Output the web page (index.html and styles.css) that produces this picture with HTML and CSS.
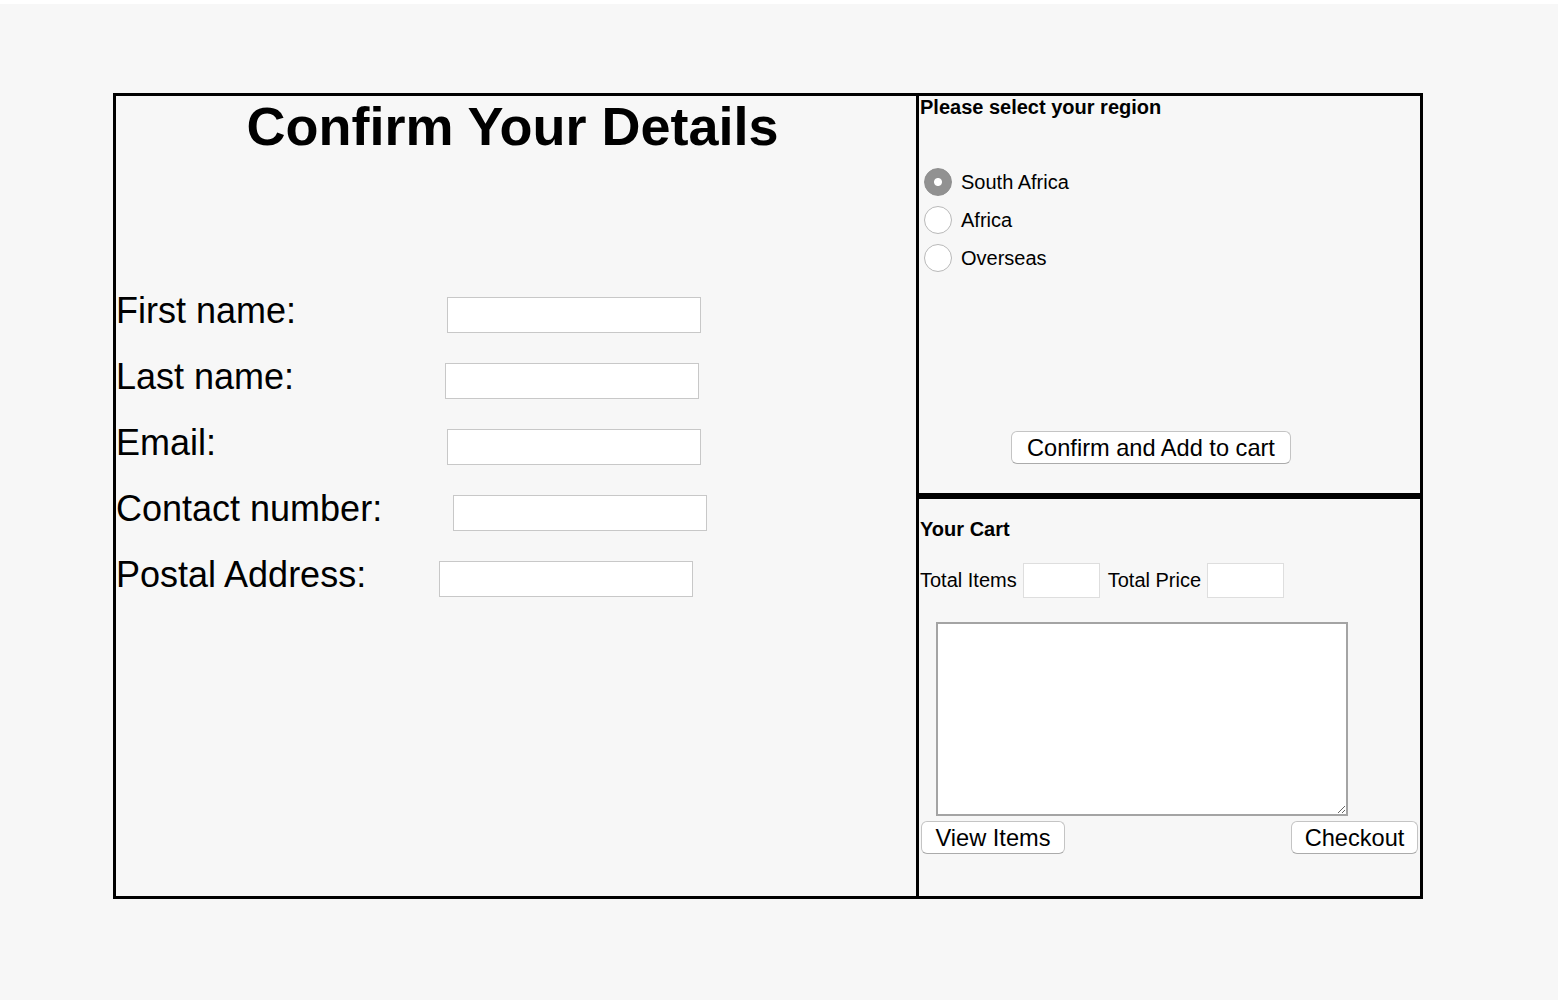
FILE: index.html
```html
<!DOCTYPE html>
<html>
<head>
<meta charset="utf-8">
<title>Confirm Your Details</title>
<link rel="stylesheet" href="styles.css">
</head>
<body>
<div class="page">
  <div class="layout">
    <section class="details">
      <h1 class="title">Confirm Your Details</h1>
      <form class="form">
        <div class="row"><label class="lbl lbl-first">First name:</label><input class="field" type="text"></div>
        <div class="row"><label class="lbl lbl-last">Last name:</label><input class="field" type="text"></div>
        <div class="row"><label class="lbl lbl-email">Email:</label><input class="field" type="text"></div>
        <div class="row"><label class="lbl lbl-contact">Contact number:</label><input class="field" type="text"></div>
        <div class="row"><label class="lbl lbl-postal">Postal Address:</label><input class="field" type="text"></div>
      </form>
    </section>
    <section class="region">
      <h4 class="heading">Please select your region</h4>
      <div class="radios">
        <label class="radio-row"><input type="radio" name="region" class="radio" checked><span>South Africa</span></label>
        <label class="radio-row"><input type="radio" name="region" class="radio"><span>Africa</span></label>
        <label class="radio-row"><input type="radio" name="region" class="radio"><span>Overseas</span></label>
      </div>
      <button class="btn btn-confirm" type="button">Confirm and Add to cart</button>
    </section>
    <section class="cart">
      <h4 class="heading cart-heading">Your Cart</h4>
      <div class="totals">
        <span class="tot-label">Total Items</span><input class="tot-field" type="text">
        <span class="tot-label tot-price">Total Price</span><input class="tot-field" type="text">
      </div>
      <textarea class="items"></textarea>
      <div class="actions">
        <button class="btn btn-view" type="button">View Items</button>
        <button class="btn btn-checkout" type="button">Checkout</button>
      </div>
    </section>
  </div>
</div>
</body>
</html>
```
FILE: styles.css
```css
html {
  background: #f7f7f7;
  border-top: 4px solid #ffffff;
}
body {
  margin: 0;
  font-family: "Liberation Sans", Arial, sans-serif;
  color: #000;
}
.page {
  padding: 89px 0 0 113px;
}
.layout {
  display: grid;
  grid-template-columns: 806px 504px;
  grid-template-rows: 403px 403px;
}
.details {
  grid-row: 1 / span 2;
  border: 3px solid #000;
  box-sizing: border-box;
}
.title {
  margin: 0;
  padding-right: 7px;
  font-size: 54px;
  line-height: 61px;
  font-weight: bold;
  text-align: center;
}
.form {
  margin-top: 133px;
}
.row {
  display: flex;
  align-items: flex-start;
  height: 66px;
}
.lbl {
  font-size: 36px;
  line-height: 41px;
  flex: none;
}
.lbl-first { width: 331px; }
.lbl-last { width: 329px; }
.lbl-email { width: 331px; }
.lbl-contact { width: 337px; }
.lbl-postal { width: 323px; }
.field {
  margin: 7px 0 0;
  width: 254px;
  height: 36px;
  box-sizing: border-box;
  border: 1px solid #c8c8c8;
  background: #fff;
  padding: 0 4px;
}
.region, .cart {
  border: 3px solid #000;
  border-left: 0;
  box-sizing: border-box;
}
.heading {
  margin: 0;
  padding-left: 1px;
  font-size: 20px;
  line-height: 23px;
  font-weight: bold;
}
.radios {
  margin-top: 44px;
  display: flex;
  flex-direction: column;
}
.radio-row {
  display: flex;
  align-items: center;
  height: 38px;
  font-size: 20px;
}
.radio {
  appearance: none;
  -webkit-appearance: none;
  margin: 0 9px 0 5px;
  width: 28px;
  height: 28px;
  border-radius: 50%;
  border: 1px solid #b9b9b9;
  background: #fff;
  box-sizing: border-box;
}
.radio:checked {
  border-color: #8f8f8f;
  background: radial-gradient(circle, #ffffff 0 3.5px, #919191 4.5px);
}
.btn {
  font-family: "Liberation Sans", Arial, sans-serif;
  font-size: 23.6px;
  height: 33px;
  padding: 0;
  white-space: nowrap;
  background: #fff;
  border: 1px solid #c4c4c4;
  border-bottom-color: #ababab;
  border-radius: 6px;
  color: #000;
  line-height: 32px;
}
.btn-confirm {
  margin: 154px 0 0 92px;
  width: 280px;
}
.cart-heading {
  margin-top: 19px;
}
.totals {
  display: flex;
  align-items: center;
  margin-top: 22px;
  padding-left: 1px;
  font-size: 20px;
}
.tot-label {
  margin-right: 6px;
}
.tot-price {
  margin-left: 8px;
}
.tot-field {
  width: 77px;
  height: 35px;
  box-sizing: border-box;
  border: 1px solid #dedede;
  background: #fff;
  margin: 0;
}
.items {
  display: block;
  margin: 24px 0 0 17px;
  width: 412px;
  height: 194px;
  box-sizing: border-box;
  border: 2px solid #a4a4a4;
  background: #fff;
  resize: both;
}
.actions {
  display: flex;
  justify-content: space-between;
  margin-top: 5px;
  padding: 0 2px;
}
.btn-view {
  width: 144px;
}
.btn-checkout {
  width: 127px;
}
```
